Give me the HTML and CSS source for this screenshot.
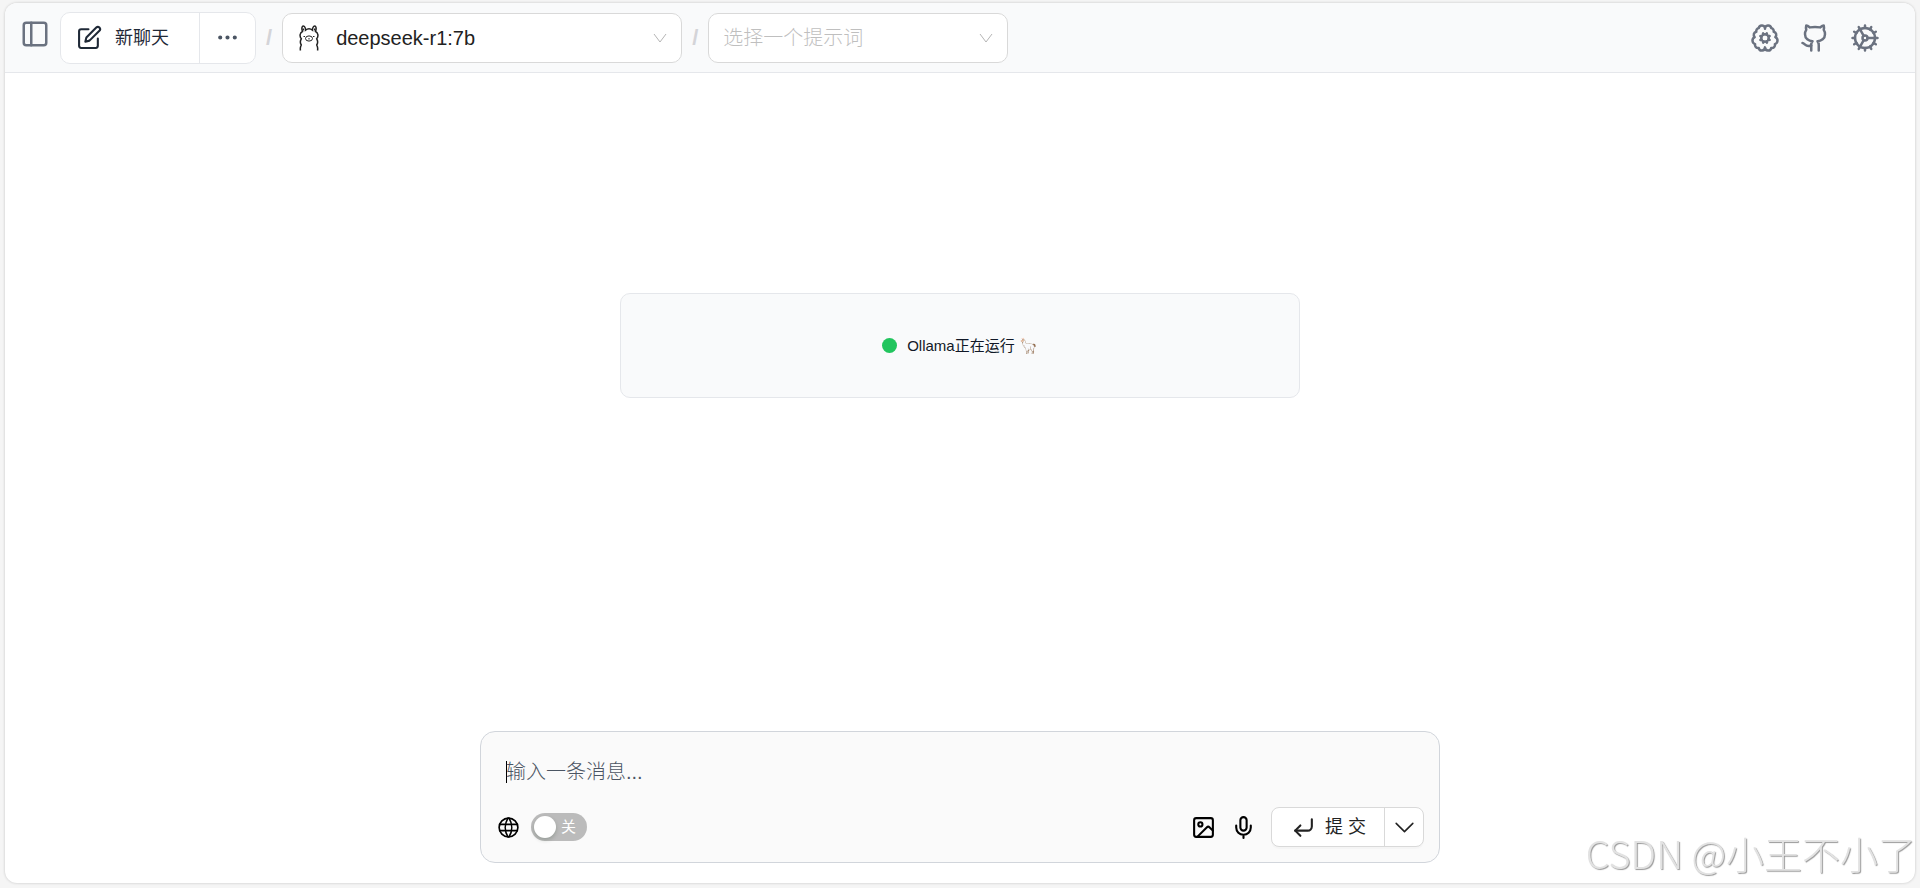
FILE: index.html
```html
<!DOCTYPE html>
<html lang="zh-CN">
<head>
    <meta charset="UTF-8">
    <meta name="viewport" content="width=device-width, initial-scale=1.0">
    <title>新聊天</title>
    <link rel="stylesheet" href="styles.css">
</head>
<body>

<div class="app">
    <header class="topbar">
        <button class="icon-btn sidebar-btn" type="button" aria-label="侧边栏">
            <svg class="icon icon-lg" viewBox="0 0 24 24"><rect x="3" y="3" width="18" height="18" rx="2"/><path d="M9 3v18"/></svg>
        </button>
        <div class="new-chat">
            <button class="new-chat-main" type="button">
                <svg class="icon" viewBox="0 0 24 24"><path d="M11 4H4a2 2 0 0 0-2 2v14a2 2 0 0 0 2 2h14a2 2 0 0 0 2-2v-7"/><path d="M18.5 2.5a2.12 2.12 0 0 1 3 3L12 15l-4 1 1-4Z"/></svg>
                <span>新聊天</span>
            </button>
            <button class="new-chat-more" type="button" aria-label="更多">
                <svg class="icon" viewBox="0 0 24 24"><circle cx="12" cy="12" r="1"/><circle cx="19" cy="12" r="1"/><circle cx="5" cy="12" r="1"/></svg>
            </button>
        </div>
        <span class="slash">/</span>
        <div class="picker model-picker">
            <svg class="llama" viewBox="0 0 20 26">
                <path d="M1.500 25.500c-.5-2 0-4 .8-5.500-1.300-2-1.300-4 0-6.200C.3 11.500.8 7.500 3.500 6.500 2.300 3.500 3 1 4.300 1s2.300 2 2.200 4.200c2-1.600 5-1.600 7 0C13.400 3 14.400 1 15.700 1s2 2.500.8 5.500c2.700 1 3.200 5 1.200 7.300 1.300 2.200 1.300 4.200 0 6.200.8 1.500 1.300 3.500.8 5.500"/>
                <path d="M4.300 3.500v2M15.700 3.500v2"/>
                <ellipse class="thin" cx="10" cy="13.500" rx="3.500" ry="2.600"/>
                <path class="thin" d="M10 13v1.500M4.500 11.500h1.500M14 11.500h1.500"/>
            </svg>
            <select id="model" aria-label="模型">
                <option>deepseek-r1:7b</option>
            </select>
            <svg class="caret" viewBox="0 0 14 14"><path d="M1 3l6 8 6-8"/></svg>
        </div>
        <span class="slash">/</span>
        <div class="picker prompt-picker">
            <select id="prompt" aria-label="提示词">
                <option>选择一个提示词</option>
            </select>
            <svg class="caret" viewBox="0 0 14 14"><path d="M1 3l6 8 6-8"/></svg>
        </div>
        <nav class="links">
            <a href="#" aria-label="模型管理">
                <svg class="icon icon-lg" viewBox="0 0 24 24"><circle cx="12" cy="12" r="3"/><path d="M12 4.500a2.500 2.500 0 0 0-4.960-.46 2.500 2.500 0 0 0-1.980 3 2.500 2.500 0 0 0-1.320 4.240 3 3 0 0 0 .34 5.580 2.500 2.500 0 0 0 2.960 3.080A2.500 2.500 0 0 0 12 19.500a2.500 2.500 0 0 0 4.960.44 2.500 2.500 0 0 0 2.960-3.080 3 3 0 0 0 .34-5.580 2.500 2.500 0 0 0-1.320-4.240 2.500 2.500 0 0 0-1.980-3A2.500 2.500 0 0 0 12 4.500"/><path d="m15.700 10.400-.9.4M9.200 13.200l-.9.4M13.600 15.700l-.4-.9M10.800 9.200l-.4-.9M15.700 13.500l-.9-.4M9.200 10.900l-.9-.4M10.500 15.700l.4-.9M13.100 9.200l.4-.9"/></svg>
            </a>
            <a href="#" aria-label="GitHub">
                <svg class="icon icon-lg" viewBox="0 0 24 24"><path d="M15 22v-4a4.800 4.800 0 0 0-1-3.500c3 0 6-2 6-5.500.08-1.250-.27-2.480-1-3.500.28-1.150.28-2.350 0-3.500 0 0-1 0-3 1.500-2.640-.5-5.360-.5-8 0C6 2 5 2 5 2c-.3 1.150-.3 2.350 0 3.500A5.403 5.403 0 0 0 4 9c0 3.500 3 5.500 6 5.500-.39.490-.68 1.050-.85 1.650-.17.600-.22 1.230-.15 1.850v4"/><path d="M9 18c-4.510 2-5-2-7-2"/></svg>
            </a>
            <a href="#" aria-label="设置">
                <svg class="icon icon-lg" viewBox="0 0 24 24"><circle cx="12" cy="12" r="8"/><circle cx="12" cy="12" r="2"/><path d="M12 2v2M12 22v-2M17 20.660l-1-1.730M11 10.270 7 3.340M20.660 17l-1.730-1M3.340 7l1.730 1M14 12h8M2 12h2M20.660 7l-1.730 1M3.340 17l1.730-1M17 3.340l-1 1.730M11 13.730l-4 6.930"/></svg>
            </a>
        </nav>
    </header>

    <main class="chat">
        <div class="status">
            <span class="dot"></span>
            <span>Ollama正在运行 🦙</span>
        </div>
    </main>

    <form class="composer">
        <textarea id="message" rows="1" placeholder="输入一条消息..." aria-label="消息"></textarea>
        <div class="tools">
            <div class="tools-left">
                <svg class="icon globe" viewBox="0 0 24 24"><circle cx="12" cy="12" r="9"/><path d="M3.600 9h16.800M3.600 15h16.800M11.500 3a17 17 0 0 0 0 18M12.500 3a17 17 0 0 1 0 18"/></svg>
                <label class="switch">
                    <input type="checkbox" aria-label="联网搜索">
                    <span>关</span>
                </label>
            </div>
            <div class="tools-right">
                <button class="icon-btn" type="button" aria-label="上传图片">
                    <svg class="icon" viewBox="0 0 24 24"><rect x="3" y="3" width="18" height="18" rx="2"/><circle cx="9" cy="9" r="2"/><path d="m21 15-3.086-3.086a2 2 0 0 0-2.828 0L6 21"/></svg>
                </button>
                <button class="icon-btn" type="button" aria-label="语音输入">
                    <svg class="icon" viewBox="0 0 24 24"><path d="M12 2a3 3 0 0 0-3 3v7a3 3 0 0 0 6 0V5a3 3 0 0 0-3-3Z"/><path d="M19 10v2a7 7 0 0 1-14 0v-2M12 19v3"/></svg>
                </button>
                <div class="submit">
                    <button class="submit-main" type="submit">
                        <svg class="icon" viewBox="0 0 24 24"><path d="m9 10-5 5 5 5"/><path d="M20 4v7a4 4 0 0 1-4 4H4"/></svg>
                        <span>提 交</span>
                    </button>
                    <button class="submit-more" type="button" aria-label="更多选项">
                        <svg class="icon chevron" viewBox="0 0 24 24"><path d="m4 8 8 8 8-8"/></svg>
                    </button>
                </div>
            </div>
        </div>
    </form>
</div>

<div class="watermark">CSDN @小王不小了</div>

</body>
</html>
```

FILE: styles.css
```css
* {
    box-sizing: border-box;
}
body {
    margin: 0;
    padding: 3px 5px 5px;
    background-color: #f5f5f5;
    font-family: "Liberation Sans", "Noto Sans CJK SC", sans-serif;
}
button, select, textarea {
    margin: 0;
    padding: 0;
    border: none;
    background: none;
    font: inherit;
    color: inherit;
}
button {
    display: flex;
    align-items: center;
    cursor: pointer;
}
.app {
    display: flex;
    flex-direction: column;
    min-height: calc(100vh - 8px);
    border-radius: 12px;
    background-color: #fff;
    box-shadow: 0 0 3px rgba(0, 0, 0, 0.2);
    overflow: hidden;
}

/* Icons */
.icon {
    display: block;
    width: 25px;
    height: 25px;
    flex: none;
    fill: none;
    stroke: currentColor;
    stroke-width: 2;
    stroke-linecap: round;
    stroke-linejoin: round;
}
.icon-lg {
    width: 30px;
    height: 30px;
}
.caret {
    width: 14px;
    height: 14px;
    flex: none;
    fill: none;
    stroke: #b5b5b5;
}
.llama {
    width: 20px;
    height: 26px;
    flex: none;
    fill: none;
    stroke: #222;
    stroke-width: 1.5;
}
.llama .thin {
    stroke-width: 1;
}

/* Top bar */
.topbar {
    display: flex;
    align-items: center;
    height: 70px;
    padding: 0 35px 0 15px;
    gap: 10px;
    border-bottom: 1px solid #e5e7eb;
    background-color: #f9fafb;
}
.sidebar-btn {
    align-self: flex-start;
    margin-top: 16px;
    color: #6b7280;
}
.new-chat {
    display: flex;
    height: 52px;
    border: 1px solid #e5e7eb;
    border-radius: 10px;
    background-color: #fff;
    color: #1f2937;
    font-size: 18px;
    line-height: 24px;
}
.new-chat-main {
    gap: 13px;
    padding: 0 30px 0 16px;
}
.new-chat-more {
    padding: 0 15px;
    border-left: 1px solid #e5e7eb;
    color: #4b5563;
}
.slash {
    color: #d4d4d8;
    font-size: 22px;
    font-weight: bold;
}
.picker {
    display: flex;
    align-items: center;
    height: 50px;
    padding: 0 14px;
    border: 1px solid #d9d9d9;
    border-radius: 10px;
    background-color: #fff;
    font-size: 20px;
}
.picker select {
    flex: 1;
    min-width: 0;
    height: 100%;
    appearance: none;
    outline: none;
}
.model-picker {
    width: 400px;
    gap: 17px;
    padding-left: 16px;
    color: #222;
}
.prompt-picker {
    width: 300px;
    color: #bfbfbf;
    font-weight: 300;
}
.links {
    display: flex;
    gap: 20px;
    margin-left: auto;
}
.links a {
    color: #6b7280;
}

/* Chat */
.chat {
    flex: 1;
    padding: 220px 20px 20px;
}
.status {
    display: flex;
    align-items: center;
    justify-content: center;
    gap: 10px;
    max-width: 680px;
    margin: 0 auto;
    padding: 40px;
    border: 1px solid #e5e7eb;
    border-radius: 10px;
    background-color: #f9fafb;
    color: #111827;
    font-size: 15px;
    line-height: 23px;
}
.dot {
    width: 15px;
    height: 15px;
    border-radius: 50%;
    background-color: #22c55e;
}

/* Message box */
.composer {
    width: 100%;
    max-width: 960px;
    margin: 0 auto 20px;
    padding: 25px 15px 15px;
    border: 1px solid #d1d5db;
    border-radius: 15px;
    background-color: #fafafa;
}
.composer textarea {
    display: block;
    width: 100%;
    height: 30px;
    margin-bottom: 20px;
    padding: 0 10px;
    background: linear-gradient(#000, #000) 10px 4px / 1px 22px no-repeat; /* text cursor */
    caret-color: transparent;
    font-size: 20px;
    font-weight: 300;
    line-height: 30px;
    color: #000;
    resize: none;
    outline: none;
}
.composer textarea::placeholder {
    color: #4b5563;
}
.tools, .tools-left, .tools-right {
    display: flex;
    align-items: center;
}
.tools {
    justify-content: space-between;
}
.tools-left {
    gap: 10px;
}
.tools-right {
    gap: 15px;
}
.globe {
    stroke-width: 1.6;
}
.switch {
    display: flex;
    align-items: center;
    width: 56px;
    height: 28px;
    padding: 3px;
    gap: 5px;
    border-radius: 14px;
    background-color: #bbb;
    color: #fff;
    font-size: 15px;
    line-height: 20px;
    cursor: pointer;
}
.switch input {
    appearance: none;
    width: 22px;
    height: 22px;
    margin: 0;
    border-radius: 50%;
    background-color: #fff;
    box-shadow: 0 2px 4px rgba(0, 35, 11, 0.2);
}
.submit {
    display: flex;
    height: 40px;
    border: 1px solid #d9d9d9;
    border-radius: 8px;
    background-color: #fff;
    box-shadow: 0 2px 0 rgba(0, 0, 0, 0.02);
    color: #222;
    font-size: 18px;
    line-height: 24px;
}
.submit-main {
    gap: 9px;
    padding: 0 18px 0 19px;
}
.submit-more {
    padding: 0 6px 0 7px;
    border-left: 1px solid #d9d9d9;
}
.chevron {
    stroke-width: 1.5;
}

.watermark {
    position: fixed;
    right: 4px;
    bottom: 8px;
    font-family: "Noto Sans CJK SC", sans-serif;
    font-size: 38px;
    font-weight: 300;
    line-height: 54px;
    color: #e2e2e2;
    text-shadow: 1px 1px 1px #999;
}
```
